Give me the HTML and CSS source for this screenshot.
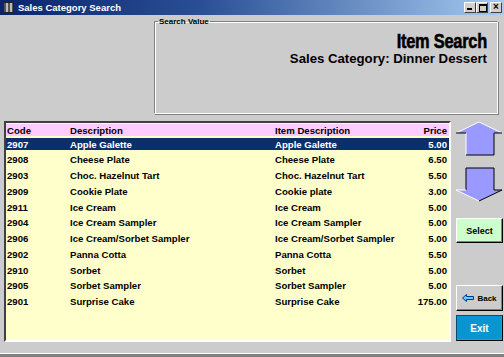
FILE: index.html
```html
<!DOCTYPE html>
<html lang="en">
<head>
    <meta charset="UTF-8">
    <title>Sales Category Search</title>
    <link rel="stylesheet" href="styles.css">
</head>
<body>
    <div class="window">
        <!-- === TITLE BAR === -->
        <div class="titlebar">
            <span class="app-icon"></span>
            <span class="title">Sales Category Search</span>
            <div class="controls">
                <span class="ctl ctl-min"></span>
                <span class="ctl ctl-max"></span>
                <span class="ctl ctl-close">×</span>
            </div>
        </div>

        <!-- === SEARCH HEADER === -->
        <div class="top">
            <fieldset class="search-box">
                <legend>Search Value</legend>
                <div class="big-title">Item Search</div>
                <div class="sub-title">Sales Category: Dinner Dessert</div>
            </fieldset>
        </div>

        <!-- === LIST + BUTTONS === -->
        <div class="main">
            <div class="list">
                <div class="list-head">
                    <span class="c-code">Code</span>
                    <span class="c-desc">Description</span>
                    <span class="c-item">Item Description</span>
                    <span class="c-price">Price</span>
                </div>
                <div class="row selected"><div class="line"><span class="c-code">2907</span><span class="c-desc">Apple Galette</span><span class="c-item">Apple Galette</span><span class="c-price">5.00</span></div></div>
                <div class="row"><div class="line"><span class="c-code">2908</span><span class="c-desc">Cheese Plate</span><span class="c-item">Cheese Plate</span><span class="c-price">6.50</span></div></div>
                <div class="row"><div class="line"><span class="c-code">2903</span><span class="c-desc">Choc. Hazelnut Tart</span><span class="c-item">Choc. Hazelnut Tart</span><span class="c-price">5.50</span></div></div>
                <div class="row"><div class="line"><span class="c-code">2909</span><span class="c-desc">Cookie Plate</span><span class="c-item">Cookie plate</span><span class="c-price">3.00</span></div></div>
                <div class="row"><div class="line"><span class="c-code">2911</span><span class="c-desc">Ice Cream</span><span class="c-item">Ice Cream</span><span class="c-price">5.00</span></div></div>
                <div class="row"><div class="line"><span class="c-code">2904</span><span class="c-desc">Ice Cream Sampler</span><span class="c-item">Ice Cream Sampler</span><span class="c-price">5.00</span></div></div>
                <div class="row"><div class="line"><span class="c-code">2906</span><span class="c-desc">Ice Cream/Sorbet Sampler</span><span class="c-item">Ice Cream/Sorbet Sampler</span><span class="c-price">5.00</span></div></div>
                <div class="row"><div class="line"><span class="c-code">2902</span><span class="c-desc">Panna Cotta</span><span class="c-item">Panna Cotta</span><span class="c-price">5.50</span></div></div>
                <div class="row"><div class="line"><span class="c-code">2910</span><span class="c-desc">Sorbet</span><span class="c-item">Sorbet</span><span class="c-price">5.00</span></div></div>
                <div class="row"><div class="line"><span class="c-code">2905</span><span class="c-desc">Sorbet Sampler</span><span class="c-item">Sorbet Sampler</span><span class="c-price">5.00</span></div></div>
                <div class="row"><div class="line"><span class="c-code">2901</span><span class="c-desc">Surprise Cake</span><span class="c-item">Surprise Cake</span><span class="c-price">175.00</span></div></div>
            </div>

            <div class="side">
                <svg class="arrow" width="48" height="36" viewBox="0 0 48 36">
                    <polygon points="24,1 47,12 39,12 39,34 11,34 11,12 1,12" fill="#9999ff"/>
                    <polyline points="1,12 24,1 47,12" fill="none" stroke="#ffffff" stroke-width="1"/>
                    <polyline points="11,34 11,12" fill="none" stroke="#ffffff" stroke-width="1"/>
                    <polyline points="47,12 39,12 39,34 11,34" fill="none" stroke="#000" stroke-width="1"/>
                    <polyline points="1,12 11,12" fill="none" stroke="#000" stroke-width="1"/>
                </svg>
                <svg class="arrow arrow-down" width="48" height="36" viewBox="0 0 48 36">
                    <polygon points="11,2 39,2 39,24 47,24 24,35 1,24 11,24" fill="#9999ff"/>
                    <polyline points="11,24 11,2 39,2" fill="none" stroke="#000" stroke-width="1"/>
                    <polyline points="39,2 39,24 47,24 24,35" fill="none" stroke="#000" stroke-width="1"/>
                    <polyline points="1,24 11,24" fill="none" stroke="#ffffff" stroke-width="1"/>
                    <polyline points="24,35 1,24" fill="none" stroke="#ffffff" stroke-width="1"/>
                </svg>
                <button class="btn btn-select">Select</button>
                <div class="spacer"></div>
                <button class="btn btn-back">
                    <svg width="12" height="8" viewBox="0 0 12 8"><polygon points="0.5,4 4.5,0.5 4.5,2.5 11.5,2.5 11.5,5.5 4.5,5.5 4.5,7.5" fill="#66ccff" stroke="#003399" stroke-width="1"/></svg>
                    Back
                </button>
                <button class="btn btn-exit">Exit</button>
            </div>
        </div>

        <div class="statusbar"></div>
    </div>
</body>
</html>
```

FILE: styles.css
```css
/* === BASE === */
* {
    margin: 0;
    padding: 0;
    box-sizing: border-box;
}

body {
    width: 504px;
    height: 357px;
    overflow: hidden;
    font-family: "Liberation Sans", Arial, sans-serif;
    background: #cccccc;
}

.window {
    display: flex;
    flex-direction: column;
    height: 357px;
}

/* === TITLE BAR === */
.titlebar {
    height: 15px;
    display: flex;
    align-items: center;
    padding: 0 2px 0 3px;
    background: linear-gradient(to right, #0a246a 0%, #2a4f96 40%, #a6caf0 100%);
    color: #fff;
}

.app-icon {
    width: 11px;
    height: 11px;
    background: repeating-linear-gradient(90deg, #555 0 2px, #bbb 2px 4px);
    border: 1px solid #222;
    margin-right: 4px;
}

.title {
    font-size: 9.5px;
    font-weight: bold;
    flex: 1;
}

.controls {
    display: flex;
}

.ctl {
    width: 12px;
    height: 11px;
    background: #d4d0c8;
    border: 1px solid;
    border-color: #fff #404040 #404040 #fff;
    position: relative;
    color: #000;
    font-size: 10px;
    line-height: 8px;
    text-align: center;
    font-weight: bold;
}

.ctl-close {
    margin-left: 2px;
}

.ctl-min::after {
    content: "";
    position: absolute;
    left: 2px;
    bottom: 2px;
    width: 5px;
    height: 2px;
    background: #000;
}

.ctl-max::after {
    content: "";
    position: absolute;
    left: 2px;
    top: 1px;
    width: 6px;
    height: 5px;
    border: 1px solid #000;
    border-top-width: 2px;
}

/* === SEARCH HEADER === */
.top {
    height: 106px;
    padding: 2px 6px 0 154px;
}

.search-box {
    height: 97px;
    border: 1px solid;
    border-color: #808080 #fff #fff #808080;
    box-shadow: inset 1px 1px 0 #fff, 1px 1px 0 #808080;
    padding: 0 10px 0 0;
    text-align: right;
}

.search-box legend {
    font-size: 8px;
    font-weight: bold;
    margin-left: 3px;
    padding: 0 1px;
    text-align: left;
}

.big-title {
    font-size: 21px;
    font-weight: bold;
    line-height: 22px;
    margin-top: 4px;
    letter-spacing: -0.3px;
    -webkit-text-stroke: 0.6px #000;
    transform: scaleX(0.78);
    transform-origin: right center;
}

.sub-title {
    font-size: 13.2px;
    font-weight: bold;
    line-height: 14px;
}

/* === LIST === */
.main {
    display: flex;
    gap: 4px;
    padding-left: 4px;
    height: 222px;
}

.list {
    width: 447px;
    height: 221px;
    background: #ffffcc;
    border: 2px solid;
    border-color: #404040 #fff #fff #404040;
    font-size: 9.6px;
    font-weight: bold;
    white-space: nowrap;
}

.list-head {
    display: flex;
    align-items: center;
    height: 12px;
    background: #ffccff;
    margin-top: 1px;
}

.row {
    padding: 2px 0 1.75px;
}

.line {
    display: flex;
    align-items: center;
    height: 12px;
}

.row.selected .line {
    background: #0a2f6b;
    color: #fff;
}

.c-code {
    width: 64px;
    padding-left: 1px;
}

.c-desc {
    width: 205px;
}

.c-item {
    flex: 1;
}

.c-price {
    width: 50px;
    text-align: right;
    padding-right: 2px;
}

/* === SIDE BUTTONS === */
.side {
    width: 48px;
    display: flex;
    flex-direction: column;
    align-items: flex-end;
}

.arrow {
    display: block;
}

.arrow-down {
    margin-top: 9px;
}

.btn {
    width: 47px;
    height: 26px;
    border: 1px solid;
    border-color: #fff #000 #000 #fff;
    box-shadow: inset -1px -1px 0 #808080;
    font-family: "Liberation Sans", Arial, sans-serif;
    font-weight: bold;
    font-size: 9px;
    color: #000;
    background: #cccccc;
}

.btn-select {
    margin-top: 16px;
    height: 25px;
    background: #ccffcc;
}

.spacer {
    flex: 1;
}

.btn-back {
    display: flex;
    align-items: center;
    justify-content: center;
    gap: 3px;
    font-size: 8px;
    margin-bottom: 4px;
}

.btn-exit {
    background: #0895d0;
    color: #fff;
    font-size: 10px;
    border-color: #0a4a70 #000 #000 #0a4a70;
    margin-bottom: 2px;
}

/* === STATUS BAR === */
.statusbar {
    flex: 1;
    border-bottom: 3px solid #808080;
    box-shadow: inset 0 -1px 0 #fff;
}
```
